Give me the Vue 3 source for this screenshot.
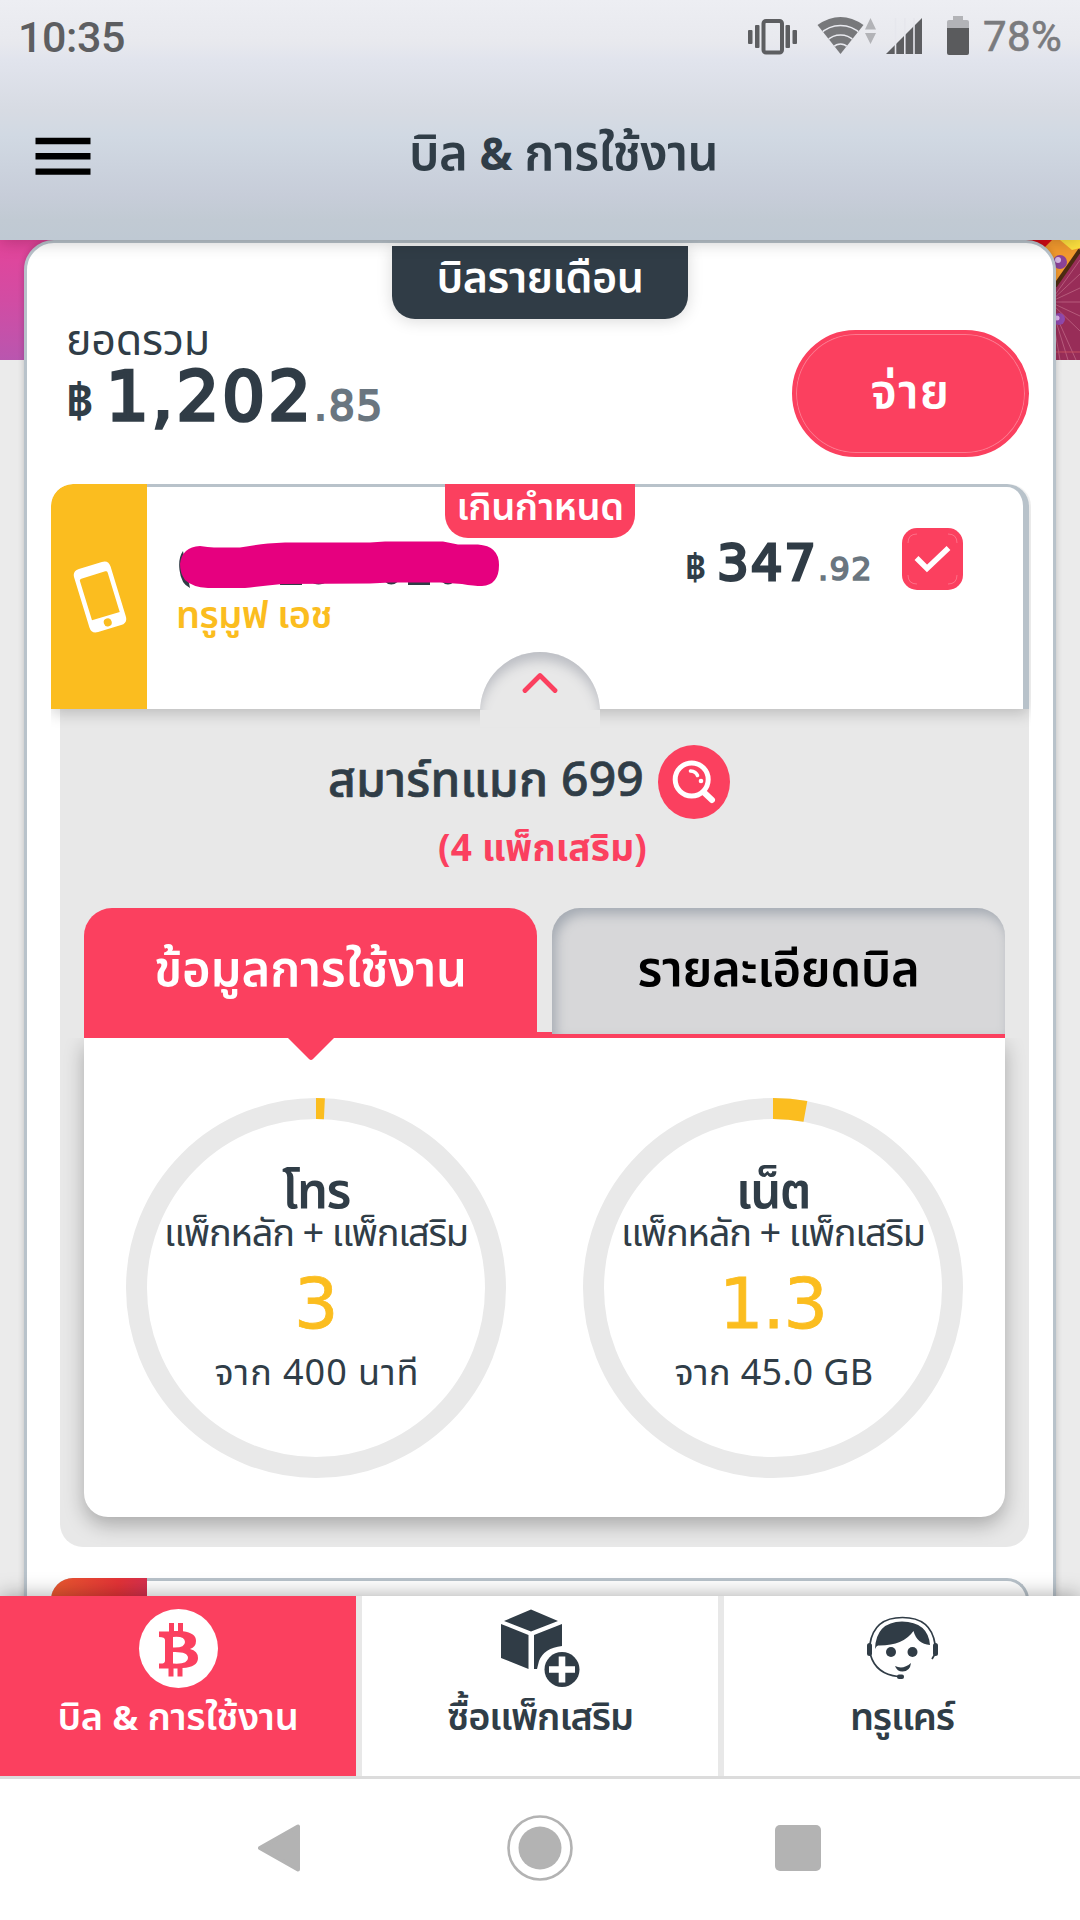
<script setup>
const C = 2 * Math.PI * 179.5

const gauges = [
  { id: 'call', name: 'โทร', nameW: 68, used: 3, total: 400, usedW: 44, from: 'จาก 400 นาที', fromW: 205 },
  { id: 'net', name: 'เน็ต', nameW: 74, used: 1.3, total: 45, usedW: 108, from: 'จาก 45.0 GB', fromW: 199 },
]

// Spreads the tracking of a label so that it fills the given width in px.
const vFit = {
  mounted(el, { value }) {
    const width = () => el.getBoundingClientRect().width
    el.style.letterSpacing = '0px'
    const natural = width()
    el.style.letterSpacing = '1px'
    const slope = width() - natural
    el.style.letterSpacing = `${((value - natural) / slope).toFixed(3)}px`
  },
}
</script>

<template>
  <div class="phone">
    <header class="top">
      <div class="status">
        <span v-fit="107" class="clock">10:35</span>
        <svg class="sys" width="226" height="44" viewBox="746 14 226 44">
          <g fill="#5d5e61">
            <rect x="748" y="30" width="4.5" height="14" rx="1" /><rect x="755" y="25" width="4.5" height="23" rx="1" />
            <rect x="785.500" y="25" width="4.500" height="23" rx="1" /><rect x="792.500" y="30" width="4.500" height="14" rx="1" />
          </g>
          <rect x="763.500" y="21" width="18.500" height="31.500" rx="2.500" fill="none" stroke="#5d5e61" stroke-width="4" />
          <clipPath id="fan"><path d="M817.500 25Q840.500 9 863.500 25L840.500 54Z" /></clipPath>
          <g clip-path="url(#fan)">
            <rect x="815" y="14" width="52" height="44" fill="#77787b" />
            <g fill="none" stroke="#e9eaf0" stroke-width="1.500">
              <circle cx="840.500" cy="54" r="10" /><circle cx="840.500" cy="54" r="19" /><circle cx="840.500" cy="54" r="28.500" />
            </g>
          </g>
          <path d="M865 29.500L870.500 18L876 29.500ZM865 33L870.500 44L876 33Z" fill="#b2b3b7" />
          <path d="M886 54L922 18V54Z" fill="#5d5e61" />
          <path d="M895.500 18V54M904.800 18V54M914 18V54" stroke="#e6e7ed" stroke-width="1.600" />
          <path d="M953 16H963V20H967Q969 20 969 22V28H947V22Q947 20 949 20H953Z" fill="#b2b3b7" />
          <path d="M947 28H969V53Q969 55 967 55H949Q947 55 947 53Z" fill="#5a5b5d" />
        </svg>
        <span v-fit="79" class="battery">78%</span>
      </div>
      <div class="bar">
        <svg class="menu" width="56" height="40" viewBox="0 0 56 40"><path d="M.5 4H55.500M.5 19.300H55.500M.5 34.600H55.500" stroke="#000" stroke-width="6.400" /></svg>
        <h1><span v-fit="309">บิล <b>&amp;</b> การใช้งาน</span></h1>
      </div>
    </header>

    <main class="page">
      <div class="banner">
        <svg class="photo" width="58" height="120" viewBox="0 0 58 120">
          <rect width="58" height="120" fill="#982d58" />
          <g stroke="#b65a7b" stroke-width="1">
            <path d="M28 62L58 20M28 62L58 34M28 62L58 48M28 62L58 62M28 62L58 76M28 62L58 91M28 62L54 120M28 62L46 120M28 62L38 120" />
          </g>
          <path d="M0 0H58V8L30 48V20L18 8Z" fill="#f39a2e" />
          <path d="M0 0H30L20 10Z" fill="#d90a16" />
          <path d="M38 0H58V8L50 10Z" fill="#ffe23f" />
          <path d="M58 10L33 46" stroke="#4c2b12" stroke-width="4" />
          <circle cx="38" cy="22" r="7" fill="#8b4398" /><circle cx="36" cy="20" r="3" fill="#d7b9e4" />
          <circle cx="37" cy="79" r="6" fill="#8e48ac" /><circle cx="35" cy="78" r="2.500" fill="#e0b5ee" />
          <path d="M30 112H58" stroke="#c44e5f" />
        </svg>
      </div>

      <section class="sheet">
        <div class="ribbon"><span v-fit="207">บิลรายเดือน</span></div>

        <div class="summary">
          <div class="total">
            <div class="caption"><span v-fit="144">ยอดรวม</span></div>
            <div class="money big">
              <span class="baht">฿</span><span v-fit="208" class="int">1,202</span><span v-fit="70" class="dec">.85</span>
            </div>
          </div>
          <button class="pay"><span v-fit="80">จ่าย</span></button>
        </div>

        <article class="account">
          <div class="kind">
            <svg width="56" height="74" viewBox="0 0 56 74">
              <g transform="translate(29 37) rotate(-17)">
                <path fill="#fff" fill-rule="evenodd" d="M-12 -33H12Q19 -33 19 -26V26Q19 33 12 33H-12Q-19 33 -19 26V-26Q-19 -33 -12 -33ZM-14.500 -21V20H14.500V-21Q14.500 -23 12.500 -23H-12.500Q-14.500 -23 -14.500 -21Z" />
                <circle cy="26.500" r="4" fill="#fbbd1f" />
              </g>
            </svg>
          </div>
          <div class="body">
            <div class="overdue"><span v-fit="167">เกินกำหนด</span></div>
            <div class="row">
              <div class="number">
                <svg width="322" height="50" viewBox="178 540 322 50">
                  <path d="M183 551Q178 558 179.500 570Q181 584 190 588ZM280 581H302V585H280ZM310 581H328Q318 588 310 581ZM384 581H399Q391 588 384 581ZM408 581H430V585H408ZM441 581H455Q448 588 441 581Z" fill="#303c46" />
                  <path d="M200 546Q208 547 214 547.500H240Q255 545 268 543.500L285 542.500H370L385 541.500H443L458 544.500H478Q499 546 499 565Q499 585 482 586Q474 586 462 584L440 582.500H390L370 583.500L282 584Q262 586 245 588H208Q192 587 185 580Q180 573 180 564Q182 547 200 546Z" fill="#e6007f" />
                </svg>
                <div class="brand"><span v-fit="156">ทรูมูฟ เอช</span></div>
              </div>
              <div class="money small">
                <span class="baht">฿</span><span v-fit="101" class="int">347</span><span v-fit="55" class="dec">.92</span>
              </div>
              <div class="check">
                <svg width="61" height="62" viewBox="0 0 61 62">
                  <path d="M6 15Q6 6 15 6M46 6Q55 6 55 15M6 47Q6 56 15 56M46 56Q55 56 55 47" fill="none" stroke="#ff8da1" stroke-width=".6" />
                  <path d="M14.500 30L25 40.500L46.500 20" fill="none" stroke="#fff" stroke-width="5.500" />
                </svg>
              </div>
            </div>
            <div class="arch">
              <svg width="36" height="22" viewBox="0 0 36 22"><path d="M3 18.500L18 3.500L33 18.500" fill="none" stroke="#fb405f" stroke-width="4.800" stroke-linecap="round" stroke-linejoin="round" /></svg>
            </div>
          </div>
        </article>

        <div class="detail">
          <div class="plan">
            <span v-fit="316">สมาร์ทแมก 699</span>
            <svg width="72" height="74" viewBox="0 0 72 74">
              <ellipse cx="36" cy="37" rx="36" ry="37" fill="#fb405f" />
              <g fill="none" stroke="#fff" stroke-linecap="round">
                <circle cx="33.700" cy="34.500" r="16.500" stroke-width="5" />
                <path d="M45.500 47L54 55" stroke-width="6" /><path d="M32.500 26Q38 26.500 39.500 30.500" stroke-width="3.600" />
              </g>
              <circle cx="43" cy="36" r="2.300" fill="#fff" />
            </svg>
          </div>
          <div class="addons"><span v-fit="209">(4 แพ็กเสริม)</span></div>

          <div class="tabs">
            <div class="tab on"><span v-fit="313">ข้อมูลการใช้งาน</span></div>
            <div class="tab off"><span v-fit="282">รายละเอียดบิล</span></div>
          </div>
          <div class="usage">
            <svg class="pointer" width="48" height="23" viewBox="0 0 48 23"><path d="M1 0H47L26 21Q24 23 22 21Z" fill="#fb405f" /></svg>
            <div v-for="g in gauges" :key="g.id" class="gauge">
              <svg class="ring" width="380" height="380" viewBox="0 0 380 380">
                <g fill="none" stroke-width="21" transform="rotate(-90 190 190)">
                  <circle cx="190" cy="190" r="179.500" stroke="#e9e9e9" />
                  <circle cx="190" cy="190" r="179.500" stroke="#fbbd1f" :stroke-dasharray="`${(C * g.used) / g.total} ${C}`" />
                </g>
              </svg>
              <div class="name"><span v-fit="g.nameW">{{ g.name }}</span></div>
              <div class="scope"><span v-fit="304">แพ็กหลัก + แพ็กเสริม</span></div>
              <div class="used"><span v-fit="g.usedW">{{ g.used }}</span></div>
              <div class="from"><span v-fit="g.fromW">{{ g.from }}</span></div>
            </div>
          </div>
        </div>

        <article class="next"><div class="kind2"></div></article>
      </section>
    </main>

    <nav class="nav">
      <a class="item active">
        <svg width="80" height="82" viewBox="0 0 80 82">
          <ellipse cx="40.500" cy="39.500" rx="39.500" ry="39.500" fill="#fff" />
          <path fill="#fb405f" fill-rule="evenodd" d="M31 14H36V22H40V14H45V22.300Q58 24 58 32Q58 38 52 40Q60 42 60 49Q60 58 44.500 59V67.500H39.500V59.500H35.500V67.500H30.500V59.500H21V54.500Q27 55 27 52V31Q27 28 21 28V22.500H31ZM35 28V38.500Q47 39 47 33Q47 27 35 28ZM35 43V54.500Q50 55.500 50 49Q50 42.500 35 43Z" />
        </svg>
        <span v-fit="241">บิล <b>&amp;</b> การใช้งาน</span>
      </a>
      <a class="item">
        <svg width="80" height="82" viewBox="500 1609 80 82">
          <path fill="#303c46" d="M531 1609.500L558 1621L531 1631.500L504 1621ZM501 1624L528.500 1635V1669L501 1658ZM562 1624V1646Q544 1648 539 1661L537 1669H534V1635Z" />
          <circle cx="562" cy="1669.500" r="17.500" fill="#303c46" />
          <path d="M549 1669.500H575M562 1656.500V1682.500" stroke="#fff" stroke-width="6.600" />
        </svg>
        <span v-fit="186">ซื้อแพ็กเสริม</span>
      </a>
      <a class="item">
        <svg width="80" height="82" viewBox="862 1609 80 82">
          <g fill="#303c46">
            <path d="M875 1649Q876 1622 902 1621.500Q928 1622 930 1645Q917 1644 913.500 1631Q903 1646 878 1645.500Q876 1646 875 1649Z" />
            <rect x="867" y="1643" width="5" height="13" rx="2.500" /><rect x="933" y="1643" width="5" height="13" rx="2.500" />
            <circle cx="891" cy="1652" r="5" /><circle cx="912.500" cy="1652" r="5" />
            <path d="M895 1666Q903 1670 911 1663Q910 1671.500 902.500 1671.500Q897 1671.500 895 1666Z" />
            <rect x="897" y="1674.500" width="7" height="4.500" rx="2" />
          </g>
          <path d="M870 1644Q874 1617.500 902.500 1617.500Q931 1617.500 935 1644M935 1654L932 1659M870.500 1655Q876 1674 898 1676.500" fill="none" stroke="#303c46" stroke-width="1.700" />
        </svg>
        <span v-fit="104">ทรูแคร์</span>
      </a>
    </nav>

    <footer class="keys">
      <svg width="564" height="66" viewBox="258 1815 564 66">
        <path d="M298 1826.500V1869.500L260 1848Z" fill="#b3b3b3" stroke="#b3b3b3" stroke-width="4" stroke-linejoin="round" />
        <circle cx="540" cy="1848" r="31.500" fill="none" stroke="#b3b3b3" stroke-width="2.600" /><circle cx="540" cy="1848" r="21.500" fill="#b3b3b3" />
        <rect x="775" y="1825" width="46" height="46" rx="5" fill="#b3b3b3" />
      </svg>
    </footer>
  </div>
</template>

<style>
body { margin: 0; }
</style>

<style scoped>
* { box-sizing: border-box; }
.phone { width: 1080px; height: 1920px; overflow: hidden; display: flex; flex-direction: column; background: #fff; color: #303d47; font-family: "Noto Sans Thai", "Noto Sans", "DejaVu Sans", sans-serif; }
span { display: inline-block; white-space: nowrap; }
svg { display: block; flex: none; }
b { font-size: .9em; font-weight: 700; }

.top { flex: none; height: 240px; position: relative; z-index: 2; background: linear-gradient(#edeef3, #e8e9ee 42px, #e1e4ed 60px, #d7dbe3 110px, #d1d9e3 135px, #c7cdd9 195px, #c1cad3 220px, #bfc9d3); box-shadow: 0 2px 16px rgba(0, 0, 0, .22); }
.status { height: 74px; display: flex; align-items: center; padding: 0 18px 0 18px; font: 500 43px/76px Roboto, sans-serif; color: #5d5e61; }
.clock { margin-right: auto; }
.sys { margin: -2px 11px 0 0; }
.battery { font-weight: 400; font-size: 42px; color: #7a7b7e; -webkit-text-stroke: .6px #7a7b7e; }
.bar { height: 166px; display: flex; align-items: center; padding-left: 35px; }
.menu { margin-top: -1px; }
h1 { margin: -2px 0 0 318px; font-size: 49px; font-weight: 600; line-height: 60px; }

.page { flex: none; height: 1356px; position: relative; overflow: hidden; background: #ebebeb; }
.banner { position: absolute; inset: 0 0 auto 0; height: 120px; background: linear-gradient(#e4449a, #d24ca3 60px, #b956af); display: flex; justify-content: flex-end; }
.sheet { position: relative; margin: 0 24px; height: 1500px; border: 3px solid #b8c2ca; border-radius: 30px 30px 0 0; background: #fff; padding: 3px 24px 0; box-shadow: 0 0 6px rgba(0, 0, 0, .2); }
.ribbon { width: 296px; height: 73px; margin: 0 auto; border-radius: 0 0 23px 23px; background: #303c46; color: #fff; text-align: center; font-size: 43px; font-weight: 600; line-height: 66px; box-shadow: 0 2px 16px rgba(0, 0, 0, .15); }
.summary { display: flex; justify-content: space-between; padding-left: 15px; height: 165px; }
.caption { font-size: 43px; line-height: 45px; height: 44px; font-weight: 400; }
.money { display: flex; align-items: baseline; font-family: "DejaVu Sans", sans-serif; }
.int { color: #303c46; }
.dec { color: #6a7680; -webkit-text-stroke: 2px #6a7680; }
.big { height: 70px; line-height: 68px; }
.big .baht { position: relative; top: -2px; width: 40px; font-size: 48px; font-weight: 700; font-family: "Noto Sans Thai", "Noto Sans", sans-serif; }
.big .int { font-size: 67px; -webkit-text-stroke: 3.6px #303c46; }
.big .dec { font-size: 41px; }
.pay { width: 237px; height: 127px; margin-top: 11px; border: 4px solid #fb405f; border-radius: 64px; background: #fb405f; box-shadow: inset 0 0 0 1px rgba(255, 255, 255, .3); color: #fff; font: 600 48px/60px "Noto Sans Thai", "Noto Sans", sans-serif; padding: 0; }

.account { position: relative; z-index: 1; height: 225px; display: flex; border-radius: 22px 22px 0 0; background: #fff; box-shadow: 0 4px 16px rgba(0, 0, 0, .2); clip-path: inset(0 -2px -30px 0 round 22px 22px 0 0); }
.kind { width: 96px; background: #fbbd1f; display: flex; align-items: center; justify-content: center; border-radius: 22px 0 0 0; }
.body { flex: 1; position: relative; border-top: 3px solid #b8c2ca; border-right: 6px solid #b8c2ca; border-radius: 0 22px 0 0; }
.overdue { position: absolute; left: 298px; top: -3px; width: 190px; height: 54px; border-radius: 0 0 23px 23px; background: #fb405f; color: #fff; text-align: center; font-size: 38px; font-weight: 600; line-height: 49px; }
.row { display: flex; padding: 41px 59px 0 31px; }
.number { width: 507px; flex: none; padding-top: 12px; }
.brand { font-size: 38px; font-weight: 600; line-height: 54px; margin-left: -2px; color: #fbbd1f; }
.small { width: 217px; flex: none; height: 60px; line-height: 70px; }
.small .baht { width: 32px; font-size: 37px; font-weight: 700; font-family: "Noto Sans Thai", "Noto Sans", sans-serif; }
.small .int { font-size: 50px; -webkit-text-stroke: 2.8px #303c46; }
.small .dec { font-size: 32px; -webkit-text-stroke-width: 1.6px; }
.check { width: 61px; height: 62px; border-radius: 15px; background: #fb405f; }
.arch { position: absolute; left: 333px; bottom: -18px; width: 120px; height: 75px; border-radius: 60px 60px 0 0; background: #e8e8e8; display: flex; justify-content: center; padding-top: 20px; box-shadow: inset 0 10px 12px -2px #bcbec4; }
.arch::after { content: ""; position: absolute; left: 0; right: 0; bottom: 0; height: 17px; background: #e8e8e8; }

.detail { margin-left: 9px; height: 838px; padding: 36px 24px 0; border-radius: 0 0 23px 23px; background: #e8e8e8; }
.plan { display: flex; align-items: center; height: 74px; gap: 14px; padding-left: 244px; font-size: 48px; font-weight: 500; -webkit-text-stroke: .7px #303d47; line-height: 78px; }
.addons { margin-top: 6px; height: 52px; padding-right: 4px; text-align: center; font-size: 37px; font-weight: 700; line-height: 51px; color: #fb405f; }
.tabs { margin-top: 31px; height: 130px; display: flex; justify-content: space-between; background: linear-gradient(#fb405f, #fb405f) bottom / 100% 6px no-repeat; }
.tab { width: 453px; height: 130px; border-radius: 28px 28px 0 0; text-align: center; font-size: 49px; font-weight: 600; line-height: 126px; }
.on { background: #fb405f; color: #fff; }
.off { height: 126px; background: #d7d7d9; color: #000; box-shadow: inset 4px 6px 12px #a5abb3; }
.usage { position: relative; height: 479px; border-radius: 0 0 24px 24px; background: #fff; box-shadow: 0 8px 20px rgba(0, 0, 0, .27); clip-path: inset(0 -24px -28px -24px); padding: 60px 42px 0; display: flex; justify-content: space-between; }
.pointer { position: absolute; left: 203px; top: 0; }
.gauge { position: relative; width: 380px; height: 380px; padding-top: 66px; text-align: center; }
.ring { position: absolute; left: 0; top: 0; }
.name { height: 53px; line-height: 58px; font-size: 49px; font-weight: 600; }
.scope { height: 37px; line-height: 36px; font-size: 38px; font-weight: 400; }
.used { height: 98px; line-height: 101px; font-family: "DejaVu Sans", sans-serif; font-size: 70px; color: #fbbd1f; -webkit-text-stroke: .8px #fbbd1f; }
.from { height: 44px; line-height: 44px; font-size: 36px; padding-left: 2px; }
.next { margin-top: 31px; height: 200px; border-top: 3px solid #b8c2ca; border-right: 3px solid #b8c2ca; border-radius: 22px 22px 0 0; }
.kind2 { width: 96px; height: 200px; margin-top: -3px; border-radius: 22px 0 0 0; background: linear-gradient(98deg, #ea5a2f, #e43337 55%, #c82c64); }

.nav { flex: none; height: 183px; position: relative; z-index: 2; display: flex; gap: 6px; background: #e8e8e8; border-bottom: 3px solid #dcdcdc; box-shadow: 0 0 20px rgba(0, 0, 0, .35); }
.item { flex: 1; display: flex; flex-direction: column; align-items: center; padding-top: 13px; background: #fff; font-size: 38px; font-weight: 600; line-height: 56px; }
.active { background: #fb405f; color: #fff; }
.keys { flex: 1; position: relative; z-index: 3; display: flex; align-items: center; justify-content: center; background: #fff; padding-bottom: 3px; }
</style>
